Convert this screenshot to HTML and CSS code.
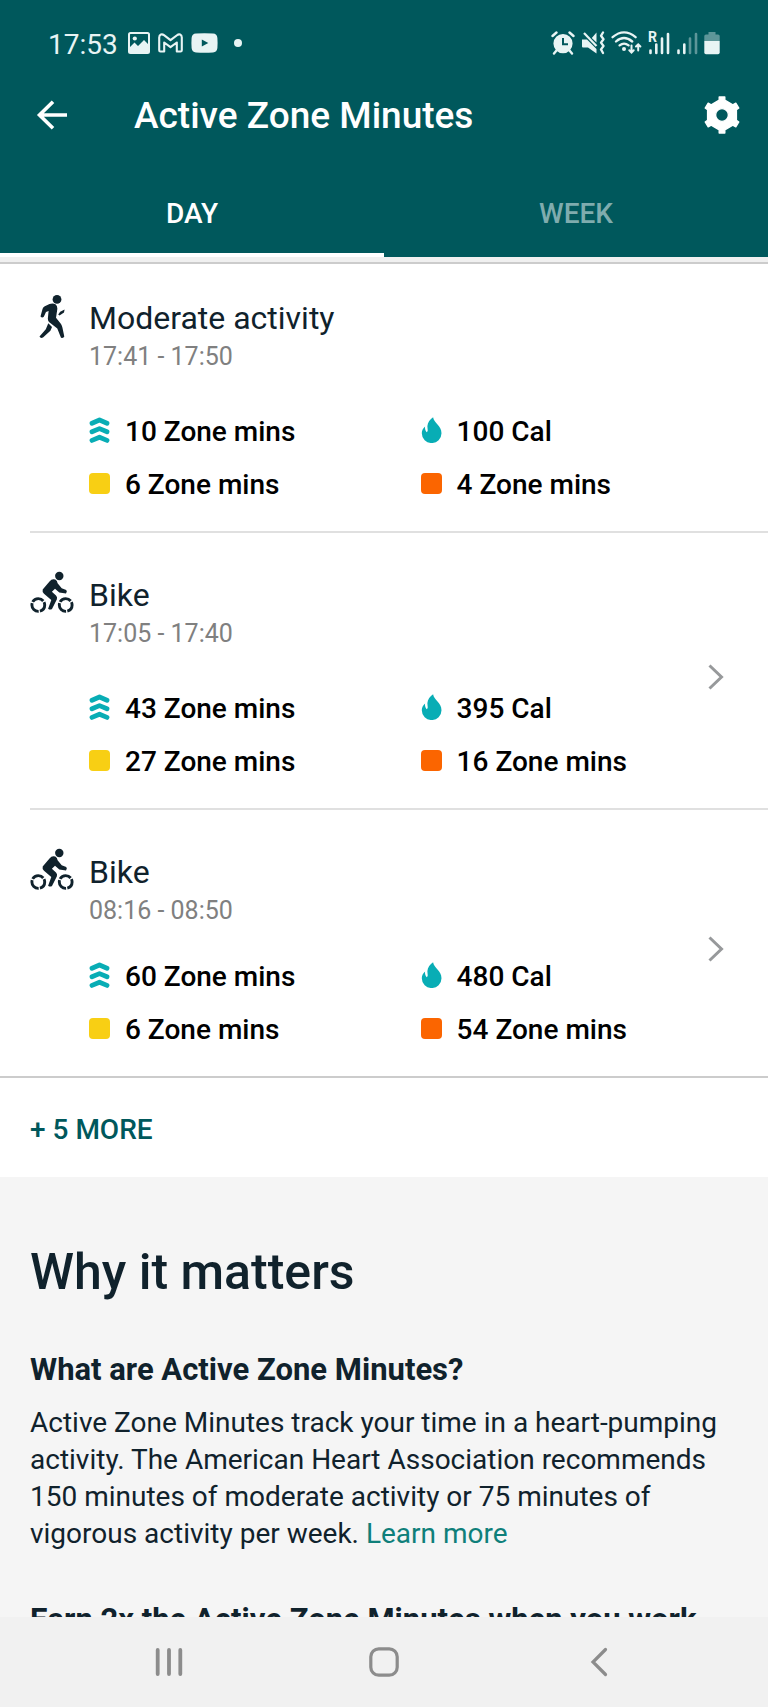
FILE: index.html
```
<!DOCTYPE html>
<html lang="en">
  <head>
    <meta charset="utf-8">
    <meta name="viewport" content="width=device-width, initial-scale=1">
    <title>Active Zone Minutes</title>
    <link rel="stylesheet" href="styles.css">
  </head>
  <body>
    <!-- shared icons -->
    <svg class="sprite" width="0" height="0">
      <symbol id="bike" viewBox="0 0 44 44">
        <circle cx="29.3" cy="5" r="4.2"/>
        <path d="M12.7 18.5 19.5 10.4Q22 7.2 25.3 8.6 27.3 9.8 27.6 12.2L31.7 17.2 36.2 19.1Q37.6 20.5 36 22.6L29.3 21.5 25 17.8 21.9 20.7 26 24.4Q27.6 26 26.9 28.3L22 38Q20 39.3 18.1 37.7L21.3 29 14 22.8Q12 21 12.7 18.5Z"/>
        <g fill="none" stroke="currentColor" stroke-width="2.9">
          <circle cx="8.3" cy="34" r="6.4" stroke-dasharray="12.1 1.3" stroke-dashoffset="4"/>
          <circle cx="35.7" cy="34" r="6.4" stroke-dasharray="12.1 1.3" stroke-dashoffset="4"/>
        </g>
      </symbol>
      <symbol id="zones" viewBox="0 0 20 26">
        <path d="M2.5 6.2 10 3 17.5 6.2M2.5 14.8 10 11.6 17.5 14.8M2.5 23.4 10 20.2 17.5 23.4" fill="none" stroke="currentColor" stroke-width="4.8" stroke-linecap="round" stroke-linejoin="round"/>
      </symbol>
      <symbol id="flame" viewBox="0 0 20 26">
        <path d="M11.6.3C12.2 5.8 20 8.8 20 16.2A9.8 9.8 0 0 1 .3 16.2C.3 13.4 1.5 11.4 3.6 9.4 3.2 12 4 13.8 5.2 15.2 7 13.8 5.8 11.6 5.9 9 6.1 5.4 8.6 2.6 11.6.3Z"/>
      </symbol>
      <symbol id="next" viewBox="0 0 16 26">
        <path d="M1.5 1.5 13.5 13 1.5 24.5" fill="none" stroke="currentColor" stroke-width="3"/>
      </symbol>
    </svg>

    <header class="header">
      <div class="status">
        <span class="clock">17:53</span>
        <div class="status-left">
          <svg width="22" height="22" viewBox="0 0 22 22">
            <rect x="1" y="1" width="20" height="20" rx="1.5" fill="none" stroke="currentColor" stroke-width="2"/>
            <circle cx="6.8" cy="6.5" r="2.1"/>
            <path d="M1 16 6.5 10.5 10 14 16 8 21 13V21H1Z"/>
          </svg>
          <svg width="25" height="20" viewBox="0 0 25 20">
            <path d="M1.2 4.5V17.2Q1.2 18.5 2.5 18.5H6.2V9.5L12.5 14.2 18.8 9.5V18.5H22.5Q23.8 18.5 23.8 17.2V4.5C23.8 1.3 21 .6 19 2.2L12.5 7.2 6 2.2C4 .6 1.2 1.3 1.2 4.5Z" fill="none" stroke="currentColor" stroke-width="2.1" stroke-linejoin="round"/>
          </svg>
          <svg width="27" height="20" viewBox="0 0 27 20">
            <path fill-rule="evenodd" d="M5 .6Q13.5 0 22 .6 26 .8 26.4 5 26.8 10 26.4 15 26 19.2 22 19.4 13.5 20 5 19.4 1 19.2.6 15 .2 10 .6 5 1 .8 5 .6ZM10.8 6.4V13.6L17.3 10Z"/>
          </svg>
          <span class="dot"></span>
        </div>
        <div class="status-right">
          <svg width="24" height="24" viewBox="0 0 24 24">
            <path fill-rule="evenodd" d="M12 3A9.6 9.6 0 1 1 12 22.2 9.6 9.6 0 0 1 12 3ZM11 7V14.2H17V12.2H13V7Z"/>
            <path d="M1.5 5 5.5 1.5M22.5 5 18.5 1.5M5.5 19.5 3 22.5M18.5 19.5 21 22.5" stroke="currentColor" stroke-width="2.4" stroke-linecap="round"/>
          </svg>
          <svg width="24" height="24" viewBox="0 0 24 24">
            <path d="M1 8.5H6L15.5 18V22.5L7 16.5H2Q1 16.5 1 15.5ZM15.5 1.5V11.5L10.8 7Z"/>
            <path d="M3 2 15.5 15" stroke="currentColor" stroke-width="2.2"/>
            <path d="M22 1.5 20 4.8 22.5 8.2 20 11.6 22.5 15 20 18.4 22 22" fill="none" stroke="currentColor" stroke-width="2.3" stroke-linecap="round" stroke-linejoin="round"/>
          </svg>
          <svg width="31" height="24" viewBox="0 0 31 24">
            <g fill="none" stroke="currentColor" stroke-width="2.3" stroke-linecap="round">
              <path d="M1.6 6.2Q13 -3.4 24.6 6.2M5 10.5Q13 3.6 21.2 10.5M8.6 14.4Q13 10.8 17.6 14.4"/>
              <path d="M20.5 14.5V21M18.3 19.3 20.5 21.5 22.7 19.3M27.2 19.5V13.5M25 15.5 27.2 13.3 29.4 15.5" stroke-width="2"/>
            </g>
            <circle cx="13" cy="18" r="2"/>
          </svg>
          <span class="signal">
            <small>R</small>
            <svg width="22" height="24" viewBox="0 0 22 24">
              <path d="M2.5 19.5V22M8.3 13.5V22M14 7.5V22M20 3V22" stroke="currentColor" stroke-width="2.6" stroke-linecap="round"/>
            </svg>
          </span>
          <svg width="22" height="24" viewBox="0 0 22 24">
            <path d="M2.5 19.5V22M8.3 13.5V22" stroke="currentColor" stroke-width="2.6" stroke-linecap="round"/>
            <path d="M14 7.5V22M20 3V22" stroke="currentColor" stroke-width="2.6" stroke-linecap="round" opacity=".4"/>
          </svg>
          <svg width="16" height="24" viewBox="0 0 16 24">
            <path d="M4.5 1H11.5V3.5H14Q15.7 3.5 15.7 5V10H.3V5Q.3 3.5 2 3.5H4.5Z" opacity=".4"/>
            <path d="M.3 10H15.7V21.5Q15.7 23.3 14 23.3H2Q.3 23.3.3 21.5Z"/>
          </svg>
        </div>
      </div>

      <div class="appbar">
        <button class="icon-button" aria-label="Back">
          <svg width="32" height="30" viewBox="0 0 32 30">
            <path d="M17 1.8 3.5 15 17 28.2M3.5 15H31" fill="none" stroke="currentColor" stroke-width="3.6"/>
          </svg>
        </button>
        <h1>Active Zone Minutes</h1>
        <button class="icon-button" aria-label="Settings">
          <svg width="36" height="38" viewBox="0 0 36 38">
            <path fill-rule="evenodd" stroke="currentColor" stroke-width="1.4" stroke-linejoin="round" d="M15.2 1H20.8V4.2L28.8 8.8 31.8 7.2 34.8 12 32.4 13.8V24.2L34.8 26 31.8 30.8 28.8 29.2 20.8 33.8V37H15.2V33.8L7.2 29.2 4.2 30.8 1.2 26 3.6 24.2V13.8L1.2 12 4.2 7.2 7.2 8.8 15.2 4.2ZM18 12.6A6.4 6.4 0 1 0 18 25.4 6.4 6.4 0 1 0 18 12.6Z"/>
          </svg>
        </button>
      </div>

      <div class="tabs" role="tablist">
        <button class="tab active" role="tab" aria-selected="true">DAY</button>
        <button class="tab" role="tab" aria-selected="false">WEEK</button>
      </div>
    </header>

    <main class="content">
      <section class="activities">
        <article class="activity">
          <svg class="activity-icon" viewBox="0 0 44 44">
            <circle cx="27" cy="5.4" r="4.4"/>
            <path d="M10.5 22.4 12.6 14.8Q13.2 13 14.8 12.2L19.5 10Q23 8.6 25.8 10.4 27.6 12 27.3 15.3L26 23.7 31 30Q32 31.6 32.4 33.5L34.3 42.6Q33.6 44.4 31 43.8L27.3 34.4 19 28Q17.6 26.4 17.9 24L18.6 17 16 18 13.8 22.8Q12 24.2 10.5 22.4Z"/>
            <path d="M18.3 29.3 22 33 20.4 36.8 13 43.6Q10.4 44.6 9.5 42.6L15.8 35.3Z"/>
            <path d="M28.2 20.5 30.2 17.8 34.6 15.6 34 18.6 29.5 21.5Z"/>
          </svg>
          <div class="activity-body">
            <h2>Moderate activity</h2>
            <p class="time">17:41 - 17:50</p>
            <ul class="stats">
              <li><svg class="stat-icon"><use href="#zones"/></svg>10 Zone mins</li>
              <li><svg class="stat-icon"><use href="#flame"/></svg>100 Cal</li>
              <li><span class="square yellow"></span>6 Zone mins</li>
              <li><span class="square orange"></span>4 Zone mins</li>
            </ul>
          </div>
        </article>

        <article class="activity">
          <svg class="activity-icon"><use href="#bike"/></svg>
          <div class="activity-body">
            <h2>Bike</h2>
            <p class="time">17:05 - 17:40</p>
            <ul class="stats">
              <li><svg class="stat-icon"><use href="#zones"/></svg>43 Zone mins</li>
              <li><svg class="stat-icon"><use href="#flame"/></svg>395 Cal</li>
              <li><span class="square yellow"></span>27 Zone mins</li>
              <li><span class="square orange"></span>16 Zone mins</li>
            </ul>
          </div>
          <button class="next" aria-label="Open bike ride 17:05"><svg width="16" height="26"><use href="#next"/></svg></button>
        </article>

        <article class="activity">
          <svg class="activity-icon"><use href="#bike"/></svg>
          <div class="activity-body">
            <h2>Bike</h2>
            <p class="time">08:16 - 08:50</p>
            <ul class="stats">
              <li><svg class="stat-icon"><use href="#zones"/></svg>60 Zone mins</li>
              <li><svg class="stat-icon"><use href="#flame"/></svg>480 Cal</li>
              <li><span class="square yellow"></span>6 Zone mins</li>
              <li><span class="square orange"></span>54 Zone mins</li>
            </ul>
          </div>
          <button class="next" aria-label="Open bike ride 08:16"><svg width="16" height="26"><use href="#next"/></svg></button>
        </article>

        <button class="more">+ 5 MORE</button>
      </section>

      <section class="info">
        <h2>Why it matters</h2>
        <h3>What are Active Zone Minutes?</h3>
        <p>Active Zone Minutes track your time in a heart-pumping activity. The American Heart Association recommends 150 minutes of moderate activity or 75 minutes of vigorous activity per week. <a href="#">Learn more</a></p>
        <h3>Earn 2x the Active Zone Minutes when you work</h3>
      </section>
    </main>

    <nav class="navbar">
      <button aria-label="Recent apps">
        <svg width="30" height="30" viewBox="0 0 30 30">
          <path d="M3.7 3V27M15 3V27M26.3 3V27" stroke="currentColor" stroke-width="3.8" stroke-linecap="round"/>
        </svg>
      </button>
      <button aria-label="Home">
        <svg width="30" height="30" viewBox="0 0 30 30">
          <rect x="1.8" y="1.8" width="26.4" height="26.4" rx="8" fill="none" stroke="currentColor" stroke-width="3.2"/>
        </svg>
      </button>
      <button aria-label="Back">
        <svg width="18" height="30" viewBox="0 0 18 30">
          <path d="M15.5 2.5 3 15 15.5 27.5" fill="none" stroke="currentColor" stroke-width="3.2" stroke-linecap="round"/>
        </svg>
      </button>
    </nav>
  </body>
</html>
```
FILE: styles.css
```
* {
  box-sizing: border-box;
  margin: 0;
  padding: 0;
}

body {
  display: flex;
  flex-direction: column;
  height: 100vh;
  font-family: Roboto, sans-serif;
  font-size: 28px;
  color: #10222c;
  background: #fff;
}

button {
  font: inherit;
  color: inherit;
  background: none;
  border: none;
  cursor: pointer;
}

svg {
  display: block;
  flex: none;
  fill: currentColor;
}

.sprite {
  position: absolute;
}

/* header */
.header {
  flex: none;
  color: #fff;
  background: #00585c;
}

.status {
  display: flex;
  align-items: center;
  height: 85px;
  padding: 0 48px;
  color: #e8f4f4;
}

.clock {
  line-height: 32px;
  padding-top: 4px;
}

.status-left {
  display: flex;
  align-items: center;
  gap: 8px;
  margin-left: 10px;
}

.dot {
  width: 8px;
  height: 8px;
  margin-left: 8px;
  border-radius: 50%;
  background: currentColor;
}

.status-right {
  display: flex;
  align-items: center;
  gap: 6px;
  margin-left: auto;
}

.signal {
  position: relative;
}

.signal small {
  position: absolute;
  top: 0;
  left: 0;
  font-size: 14px;
  font-weight: 700;
  line-height: 12px;
}

.appbar {
  display: flex;
  align-items: center;
  height: 60px;
  padding: 0 28px 0 36px;
}

.appbar h1 {
  flex: 1;
  margin-left: 66px;
  font-size: 37px;
  font-weight: 500;
}

.tabs {
  display: flex;
  margin-top: 24px;
}

.tab {
  flex: 1;
  height: 88px;
  border-top: 4px solid transparent;
  border-bottom: 4px solid transparent;
  font-weight: 500;
  color: #7facae;
}

.tab.active {
  color: #fff;
  border-bottom-color: #fff;
}

/* activities */
.content {
  flex: 1;
  min-height: 0;
  overflow: hidden;
  background: #f5f5f5;
}

.activities {
  border-top: 5px solid #f0f0f0;
  background: #fff;
}

.activity {
  display: flex;
  margin-left: 30px;
  padding-top: 12px;
  border-bottom: 2px solid #e0e0e0;
}

.activity:first-child {
  margin-left: 0;
  padding-top: 4px;
  padding-left: 30px;
  border-top: 2px solid #ccc;
  border-bottom: none;
}

.activity:nth-child(2) {
  border-top: 2px solid #e0e0e0;
}

.activity:nth-child(3) {
  margin-left: 0;
  padding-left: 30px;
  border-bottom-color: #ccc;
}

.activity-icon {
  width: 44px;
  height: 44px;
  margin-top: 26px;
}

.activity-body {
  flex: 1;
  margin-left: 15px;
  padding: 30px 0 26px;
}

.activity h2 {
  font-size: 32px;
  font-weight: 400;
  line-height: 40px;
}

.time {
  font-size: 25px;
  line-height: 38px;
  color: #808080;
}

.stats {
  display: grid;
  grid-template-columns: 15fr 13fr;
  row-gap: 13px;
  margin-top: 36px;
  list-style: none;
}

.activity:nth-child(3) .stats {
  margin-top: 27px;
}

.stats li {
  display: flex;
  align-items: center;
  gap: 15px;
  font-weight: 500;
  line-height: 40px;
  color: #000;
}

.stat-icon {
  width: 21px;
  height: 26px;
  margin-bottom: 4px;
  color: #08adb5;
}

.square {
  width: 21px;
  height: 21px;
  margin-bottom: 4px;
  border-radius: 4px;
}

.yellow {
  background: #f8cf14;
}

.orange {
  background: #fb6500;
}

.next {
  align-self: center;
  margin-right: 44px;
  color: #97999b;
}

.activity:first-child .activity-body {
  margin-right: 60px;
}

.more {
  display: block;
  width: 100%;
  height: 99px;
  padding: 4px 30px 0;
  font-weight: 500;
  text-align: left;
  color: #00585c;
}

/* info */
.info {
  padding: 65px 30px 0;
}

.info h2 {
  font-size: 50px;
  font-weight: 500;
  line-height: 60px;
  margin-bottom: 48px;
}

.info h3 {
  font-size: 31px;
  font-weight: 700;
  line-height: 40px;
  margin-bottom: 14px;
  white-space: nowrap;
}

.info p {
  line-height: 37px;
  margin-bottom: 48px;
}

.info a {
  color: #0f7f7a;
  text-decoration: none;
}

/* system navigation */
.navbar {
  display: flex;
  flex: none;
  height: 90px;
  padding: 0 62px;
  color: #8c8c8c;
  background: #f1f1f1;
}

.navbar button {
  display: flex;
  flex: 1;
  align-items: center;
  justify-content: center;
}
```
